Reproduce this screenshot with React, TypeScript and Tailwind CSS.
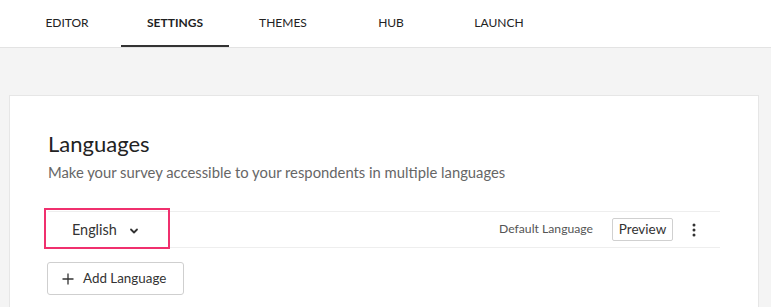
import React from "react";

const tabs = ["EDITOR", "SETTINGS", "THEMES", "HUB", "LAUNCH"];

const App = () => {
  return (
    <div
      className="w-full h-[307px] bg-[#f4f4f4] overflow-hidden"
      style={{ fontFamily: "Lato, 'Open Sans', sans-serif" }}
    >
      {/* top navigation */}
      <div className="h-[48px] bg-white border-b border-[#e3e3e3] flex pl-[13px]">
        {tabs.map((t) => (
          <div
            key={t}
            className={
              t === "SETTINGS"
                ? "w-[108px] h-[47px] flex items-center justify-center text-[12px] font-bold text-[#1f1f1f] border-b-2 border-[#333]"
                : "w-[108px] h-[47px] flex items-center justify-center text-[12px] text-[#222] pb-[2px]"
            }
          >
            {t}
          </div>
        ))}
      </div>

      <div className="pl-[9px] pr-[12px] pt-[47px]">
        <div className="bg-white border border-[#e6e6e6] px-[38px] pt-[34px] h-[260px]">
          <h1 className="text-[22px] leading-[28px] text-[#222]">Languages</h1>
          <p className="text-[14.8px] leading-[20px] text-[#666] mt-[4px]">
            Make your survey accessible to your respondents in multiple languages
          </p>

          {/* language row */}
          <div className="mt-[29px] h-[37px] border-t border-b border-[#eeeeee] flex items-center">
            <div className="relative w-[118px] h-full flex items-center pl-[24px] text-[14.4px] text-[#333]">
              <span>English</span>
              <svg
                width="10"
                height="10"
                viewBox="0 0 10 10"
                className="ml-[12px] mt-[2px]"
                fill="none"
                stroke="#333"
                strokeWidth="1.8"
                strokeLinecap="round"
                strokeLinejoin="round"
              >
                <path d="M2 3.5 L5 6.5 L8 3.5" />
              </svg>
              <span className="absolute left-[-4px] top-[-4px] right-[-4px] bottom-[-2px] border-2 border-[#f0306e]" />
            </div>
            <div className="ml-auto flex items-center">
              <span className="text-[12.2px] text-[#555]">Default Language</span>
              <button className="ml-[19px] h-[23px] w-[61px] border border-[#d0d0d0] rounded-[2px] text-[13.5px] text-[#333] flex items-center justify-center">
                Preview
              </button>
              <svg width="4" height="14" viewBox="0 0 4 14" className="ml-[19px] mr-[24px]">
                <circle cx="2" cy="2" r="1.5" fill="#333" />
                <circle cx="2" cy="7" r="1.5" fill="#333" />
                <circle cx="2" cy="12" r="1.5" fill="#333" />
              </svg>
            </div>
          </div>

          <button className="mt-[14px] ml-[-1px] h-[33px] w-[137px] border border-[#cfcfcf] rounded-[3px] flex items-center pl-[14px] text-[13.4px] text-[#333]">
            <svg
              width="12"
              height="12"
              viewBox="0 0 12 12"
              stroke="#333"
              strokeWidth="1.3"
              fill="none"
            >
              <path d="M6 0.5 V11.5 M0.5 6 H11.5" />
            </svg>
            <span className="ml-[9px]">Add Language</span>
          </button>
        </div>
      </div>
    </div>
  );
};

export default App;
